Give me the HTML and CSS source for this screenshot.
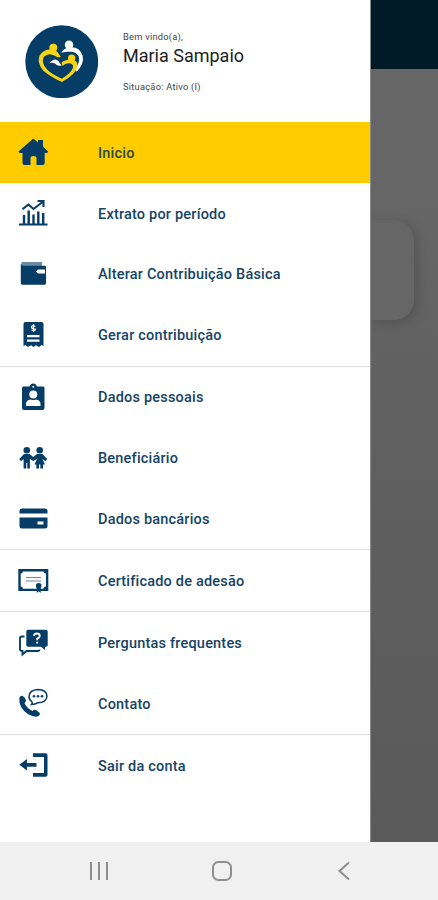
FILE: index.html
```html
<!DOCTYPE html>
<html lang="pt-BR">
<head>
<meta charset="utf-8">
<meta name="viewport" content="width=device-width, initial-scale=1">
<title>Menu</title>
<link rel="stylesheet" href="styles.css">
</head>
<body>
<div class="phone">
  <div class="stage">
    <aside class="drawer">
      <header class="profile">
        <svg class="logo" viewBox="0 0 74 74">
          <circle cx="37" cy="37" r="36.7" fill="#063d66"/>
          <circle cx="44.3" cy="20" r="4.300" fill="#fff"/>
          <path d="M36.500 28Q40 22 47 22.500Q55 22.500 58 31Q60 39 52 47L50.500 45Q56 37 54 31.500Q51 27 46 27Q41 26.500 36.500 28Z" fill="#fff"/>
          <path d="M24.500 38.500Q31 31 35 38.500L37 40.500Q33 42 30.500 39Q27.500 37.500 24.500 38.500Z" fill="#fff"/>
          <g fill="#f8d414">
            <circle cx="28.500" cy="22.800" r="4"/>
            <circle cx="47" cy="33.300" r="3.700"/>
            <path d="M36 32Q34 33.500 30 31Q24 27.500 19 32Q16 38 22 44.500Q26 49 37 54Q47 48 48.500 42.500Q48.500 39 45 38.500Q41 38 38 41Q35 37 40 36Q44 34 48 35Q53 36 53 41Q52 49 37 57.500Q24 51 18.500 46Q12 39 14.500 31Q19 24.500 26 24.500Q32 24.500 36 32Z"/>
          </g>
        </svg>
        <div class="identity">
          <p class="small greeting">Bem vindo(a),</p>
          <h1 class="name">Maria Sampaio</h1>
          <p class="small status">Situação: Ativo (I)</p>
        </div>
      </header>
      <nav class="menu">
        <a class="item active">
          <svg class="icon" viewBox="0 0 32 32"><path d="M16.300 2.500L21 6.500V4h5v6.500L31 15.500Q31 17.500 27.700 17V27Q27.700 29 25.700 29H19.500V22Q19.500 20 16.500 20T13.500 22V29H7.500Q5.500 29 5.500 27V17Q1.500 17.500 1.500 15.500Z"/></svg>
          <span>Inicio</span></a>
        <a class="item">
          <svg class="icon" viewBox="0 0 32 32"><path class="line" stroke-width="2.100" d="M5.500 12.200L11.500 7.500L16.500 12L25.500 5M20.500 4H26.500V10M2 27.500H30.500"/><path class="line" stroke-width="2.400" d="M7 27V18M11.700 27V13.500M16.500 27V17.500M21.300 27V14.500M26.200 27V16"/></svg>
          <span>Extrato por período</span></a>
        <a class="item">
          <svg class="icon" viewBox="0 0 32 32"><path d="M4.500 4H25V8H4.500Z" opacity=".6"/><path d="M3.800 5.500L5.500 7.700H27.500Q29 7.700 29 9V25Q29 26.700 27.500 26.700H5.500Q3.800 26.700 3.800 25Z"/><path fill="#fff" d="M21 11.500H28V15.500H21L19 13.500Z"/></svg>
          <span>Alterar Contribuição Básica</span></a>
        <a class="item">
          <svg class="icon" viewBox="0 0 32 32"><path d="M8.500 3H24.500Q26.500 3 26.500 5V27L24.500 26L22 28L19 26.300L16.500 28L14 26.300L11 28L8.500 26L6.500 27V5Q6.500 3 8.500 3Z"/><path fill="none" stroke="#fff" stroke-width="1.200" d="M18.500 7.300Q14.500 6 14.500 8T18.500 10Q18.500 12.500 14.500 11M16.500 5V13"/><path fill="#fff" d="M10 16H22.500V18.300H10ZM10 20.500H22.500V22.700H10Z"/></svg>
          <span>Gerar contribuição</span></a>
        <hr>
        <a class="item">
          <svg class="icon" viewBox="0 0 32 32"><path d="M6.500 5.500H12.500Q13.500 2.500 16.200 2.500T20 5.500H26Q27.500 5.500 27.500 7V27Q27.500 29 25.500 29H7Q5 29 5 27V7Q5 5.500 6.500 5.500Z"/><g fill="#fff"><circle cx="16.300" cy="5.700" r="1"/><circle cx="16.300" cy="13.500" r="4"/><path d="M9 25V22.500Q9.500 19 13.500 18.500Q16.300 19.500 19 18.500Q23 19 23.500 22.500V25Z"/></g></svg>
          <span>Dados pessoais</span></a>
        <a class="item">
          <svg class="icon" viewBox="0 0 32 32"><circle cx="9.800" cy="8.300" r="3.300"/><circle cx="22.700" cy="8.300" r="3.300"/><path d="M7 12H12.500L16.300 15L20 12H25.500L30.200 17L28.500 19.300L25.500 17L28 22.500H26V26.500H23.300V22.500H22V26.500H19.300V22.500H17.500L20 17L16.300 19L12.900 17V26.500H10.300V21H9.300V26.500H6.600V17L4 19.300L2.300 17Z"/></svg>
          <span>Beneficiário</span></a>
        <a class="item">
          <svg class="icon" viewBox="0 0 32 32"><path d="M5 5.500H28Q30.500 5.500 30.500 8V10.500H2.500V8Q2.500 5.500 5 5.500ZM2.500 14.500H30.500V23Q30.500 25.500 28 25.500H5Q2.500 25.500 2.500 23Z"/><path fill="#fff" d="M20.500 18.500H26.500V21.500H20.500Z"/></svg>
          <span>Dados bancários</span></a>
        <hr>
        <a class="item">
          <svg class="icon" viewBox="0 0 32 32"><path fill-rule="evenodd" d="M1.300 4H31.300V26H1.300ZM6 6.500Q6 8.500 3.700 8.500V21.500Q6 21.500 6 23.800H26.500Q26.500 21.500 29 21.500V8.500Q26.500 8.500 26.500 6.500Z"/><path class="line" stroke-width="1.100" opacity=".6" d="M9 12.500H24M9 16H24"/><circle cx="21.700" cy="20.700" r="2.800"/><path d="M19.700 22H23.700V28L21.700 26.300L19.700 28Z"/></svg>
          <span>Certificado de adesão</span></a>
        <hr>
        <a class="item">
          <svg class="icon" viewBox="0 0 32 32"><path d="M11 2.700H29Q30.700 2.700 30.700 4.400V18Q30.700 19.700 29 19.700H28V23L24 19.700H11Q9.300 19.700 9.300 18V4.400Q9.300 2.700 11 2.700Z"/><path class="line" stroke-width="1.900" d="M7.500 9.500H5Q3 9.500 3 11.500V22.500Q3 24 5.500 24V27.500L9.500 24H21Q22.500 24 22.500 22.500"/><path fill="none" stroke="#fff" stroke-width="1.900" d="M17 8.800Q17.300 6.500 20 6.500T22.800 9Q22.800 10.500 20.200 11.700V13.200M20.200 14.700V16.500"/></svg>
          <span>Perguntas frequentes</span></a>
        <a class="item">
          <svg class="icon" viewBox="0 0 32 32"><path d="M2.300 11Q3.300 8.500 5.500 8.800Q8.800 11 9 13.500Q8.700 15.300 7.500 16.200Q10 21.300 15.500 24Q17 22 19 23L22.800 26Q23.300 28.500 21 29.300Q17.500 30.500 11.500 27.500Q1.500 21 2.300 11Z"/><path class="line" stroke-width="1.500" d="M15 14.800Q12 13 12 9.500Q12.500 3 21 2.600Q29.800 3 30 9.200Q29.500 15.500 20.500 15.800Q18.500 17.300 14.500 17.500Q15.700 16 15 14.800Z"/><circle cx="17" cy="9.300" r="1.300"/><circle cx="21" cy="9.300" r="1.300"/><circle cx="25" cy="9.300" r="1.300"/></svg>
          <span>Contato</span></a>
        <hr>
        <a class="item">
          <svg class="icon" viewBox="0 0 32 32"><path d="M2.300 15.800L10 10V14H19.500V17.700H10V21.600ZM16 4.200H28.500Q30.500 4.200 30.500 6V26Q30.500 27.700 28.500 27.700H16V24H27V8H16Z"/></svg>
          <span>Sair da conta</span></a>
      </nav>
    </aside>
    <div class="backdrop">
      <div class="appbar"></div>
      <div class="card"></div>
    </div>
  </div>
  <footer class="navbar">
    <svg viewBox="0 0 24 24"><path d="M4 3V21M12 3V21M20 3V21"/></svg>
    <svg viewBox="0 0 24 24"><rect x="3" y="3" width="18" height="18" rx="5.500"/></svg>
    <svg viewBox="0 0 24 24"><path d="M17 3.500L7.500 12L17 20.500"/></svg>
  </footer>
</div>
</body>
</html>
```
FILE: styles.css
```css
* { box-sizing: border-box; }
body { margin: 0; font-family: Roboto, "Liberation Sans", sans-serif; }
p, h1 { margin: 0; font-weight: 400; white-space: nowrap; }

.phone { width: 438px; height: 900px; display: flex; flex-direction: column; overflow: hidden; }
.stage { display: flex; height: 842px; }

.drawer { width: 370px; background: #fff; }
.profile { height: 122px; padding: 24.500px 0 0 24.500px; display: flex; gap: 25px; }
.logo { width: 73.500px; height: 73.500px; flex: none; }
.identity { padding-top: 6.500px; color: #1d1d1d; }
.small { font-size: 9.300px; line-height: 12px; color: #444; letter-spacing: .25px; }
.name { font-size: 18px; line-height: 22px; margin-top: 2px; letter-spacing: 0; }
.status { margin-top: 14px; }

.menu hr { margin: 0; border: 0; height: 1px; background: #dedede; }
.item {
  display: flex; align-items: center; gap: 49px; height: 60.900px; padding-left: 17px;
  font-size: 14.500px; font-weight: 500; letter-spacing: .2px; color: #164464; white-space: nowrap;
}
.item span { padding-top: 1.500px; }
.active { background: #fc0; }
.active span { color: #2c4940; }
.icon { width: 32px; height: 32px; fill: #063d66; flex: none; }
.line { fill: none; stroke: #063d66; }

.backdrop { flex: 1; border-left: 1px solid #8b8b8b; background: linear-gradient(#666 68px, #666 190px, #606060 420px, #5a5a5a); overflow: hidden; }
.appbar { height: 68.500px; background: #001a29; }
.card { width: 43px; height: 100px; margin-top: 151px; border-radius: 0 20px 20px 0; background: #666; box-shadow: 3px 3px 12px rgba(0, 0, 0, .17); }

.navbar { height: 58px; padding-left: 5px; background: #f0f0f0; display: flex; align-items: center; justify-content: center; gap: 98.500px; }
.navbar svg { width: 24px; height: 24px; fill: none; stroke: #8e8e8e; stroke-width: 2; }
```
